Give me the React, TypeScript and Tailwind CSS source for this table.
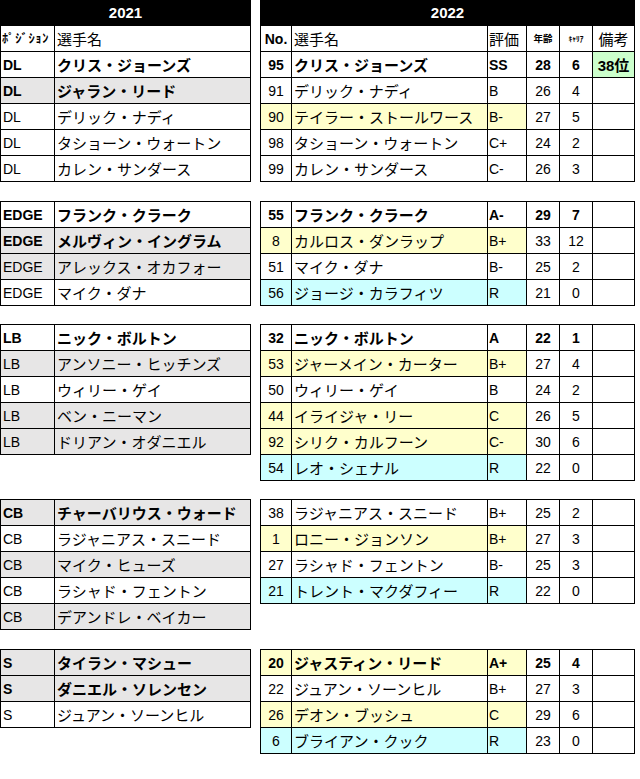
type LRow = { pos: string; name: string; bold?: boolean; gray?: boolean };
type RRow = {
  no: string;
  name: string;
  grade: string;
  age: string;
  career: string;
  note?: string;
  bold?: boolean;
  bg?: "y" | "c";
};
type Group = { left: LRow[]; right: RRow[]; gap: string };

const GROUPS: Group[] = [
  {
    gap: "",
    left: [
      { pos: "DL", name: "クリス・ジョーンズ", bold: true },
      { pos: "DL", name: "ジャラン・リード", bold: true, gray: true },
      { pos: "DL", name: "デリック・ナディ" },
      { pos: "DL", name: "タショーン・ウォートン" },
      { pos: "DL", name: "カレン・サンダース" },
    ],
    right: [
      { no: "95", name: "クリス・ジョーンズ", grade: "SS", age: "28", career: "6", note: "38位", bold: true },
      { no: "91", name: "デリック・ナディ", grade: "B", age: "26", career: "4" },
      { no: "90", name: "テイラー・ストールワース", grade: "B-", age: "27", career: "5", bg: "y" },
      { no: "98", name: "タショーン・ウォートン", grade: "C+", age: "24", career: "2" },
      { no: "99", name: "カレン・サンダース", grade: "C-", age: "26", career: "3" },
    ],
  },
  {
    gap: "mt-[19px]",
    left: [
      { pos: "EDGE", name: "フランク・クラーク", bold: true },
      { pos: "EDGE", name: "メルヴィン・イングラム", bold: true, gray: true },
      { pos: "EDGE", name: "アレックス・オカフォー", gray: true },
      { pos: "EDGE", name: "マイク・ダナ" },
    ],
    right: [
      { no: "55", name: "フランク・クラーク", grade: "A-", age: "29", career: "7", bold: true },
      { no: "8", name: "カルロス・ダンラップ", grade: "B+", age: "33", career: "12", bg: "y" },
      { no: "51", name: "マイク・ダナ", grade: "B-", age: "25", career: "2" },
      { no: "56", name: "ジョージ・カラフィツ", grade: "R", age: "21", career: "0", bg: "c" },
    ],
  },
  {
    gap: "mt-[18px]",
    left: [
      { pos: "LB", name: "ニック・ボルトン", bold: true },
      { pos: "LB", name: "アンソニー・ヒッチンズ", gray: true },
      { pos: "LB", name: "ウィリー・ゲイ" },
      { pos: "LB", name: "ベン・ニーマン", gray: true },
      { pos: "LB", name: "ドリアン・オダニエル", gray: true },
    ],
    right: [
      { no: "32", name: "ニック・ボルトン", grade: "A", age: "22", career: "1", bold: true },
      { no: "53", name: "ジャーメイン・カーター", grade: "B+", age: "27", career: "4", bg: "y" },
      { no: "50", name: "ウィリー・ゲイ", grade: "B", age: "24", career: "2" },
      { no: "44", name: "イライジャ・リー", grade: "C", age: "26", career: "5", bg: "y" },
      { no: "92", name: "シリク・カルフーン", grade: "C-", age: "30", career: "6", bg: "y" },
      { no: "54", name: "レオ・シェナル", grade: "R", age: "22", career: "0", bg: "c" },
    ],
  },
  {
    gap: "mt-[18px]",
    left: [
      { pos: "CB", name: "チャーバリウス・ウォード", bold: true, gray: true },
      { pos: "CB", name: "ラジャニアス・スニード" },
      { pos: "CB", name: "マイク・ヒューズ", gray: true },
      { pos: "CB", name: "ラシャド・フェントン" },
      { pos: "CB", name: "デアンドレ・ベイカー", gray: true },
    ],
    right: [
      { no: "38", name: "ラジャニアス・スニード", grade: "B+", age: "25", career: "2" },
      { no: "1", name: "ロニー・ジョンソン", grade: "B+", age: "27", career: "3", bg: "y" },
      { no: "27", name: "ラシャド・フェントン", grade: "B-", age: "25", career: "3" },
      { no: "21", name: "トレント・マクダフィー", grade: "R", age: "22", career: "0", bg: "c" },
    ],
  },
  {
    gap: "mt-[19px]",
    left: [
      { pos: "S", name: "タイラン・マシュー", bold: true, gray: true },
      { pos: "S", name: "ダニエル・ソレンセン", bold: true, gray: true },
      { pos: "S", name: "ジュアン・ソーンヒル" },
    ],
    right: [
      { no: "20", name: "ジャスティン・リード", grade: "A+", age: "25", career: "4", bold: true, bg: "y" },
      { no: "22", name: "ジュアン・ソーンヒル", grade: "B+", age: "27", career: "3" },
      { no: "26", name: "デオン・ブッシュ", grade: "C", age: "29", career: "6", bg: "y" },
      { no: "6", name: "ブライアン・クック", grade: "R", age: "23", career: "0", bg: "c" },
    ],
  },
];

const LAT = "font-['Liberation_Sans','Noto_Sans_CJK_JP',sans-serif] text-[14px]";
const JP = "font-['Noto_Sans_CJK_JP',sans-serif] text-[15px]";
const CELL = "h-full flex items-center border-r border-black leading-none";

const BG = { y: "bg-[#ffffcc]", c: "bg-[#ccffff]" };

const LeftTable = ({ rows, head }: { rows: LRow[]; head: boolean }) => (
  <div className="w-[251px] flex flex-col">
    {head && (
      <div className={`h-[26px] bg-black text-white font-bold flex items-center justify-center ${LAT} text-[15px]`}>
        2021
      </div>
    )}
    <div className={`border-l border-black ${head ? "" : "border-t"}`}>
      {head && (
        <div className="flex h-[26px] border-b border-black">
          <div className={`${CELL} w-[54px] pl-[1px]`}>
            <span className="font-['Noto_Sans_CJK_JP',sans-serif] text-[12.5px] font-bold tracking-[0.7px]">ﾎﾟｼﾞｼｮﾝ</span>
          </div>
          <div className={`${CELL} w-[196px] pl-[2px] ${JP} text-[14.5px]`}>選手名</div>
        </div>
      )}
      {rows.map((r, i) => (
        <div
          key={i}
          className={`flex h-[26px] border-b border-black ${r.gray ? "bg-[#e7e6e6]" : "bg-white"} ${r.bold ? "font-bold" : ""}`}
        >
          <div className={`${CELL} w-[54px] pl-[2px] pt-[1px] ${LAT}`}>{r.pos}</div>
          <div className={`${CELL} w-[196px] pl-[2px] ${JP}`}>{r.name}</div>
        </div>
      ))}
    </div>
  </div>
);

const RightTable = ({ rows, head }: { rows: RRow[]; head: boolean }) => (
  <div className="w-[375px] flex flex-col">
    {head && (
      <div className={`h-[26px] bg-black text-white font-bold flex items-center justify-center ${LAT} text-[15px]`}>
        2022
      </div>
    )}
    <div className={`border-l border-black ${head ? "" : "border-t"}`}>
      {head && (
        <div className="flex h-[26px] border-b border-black">
          <div className={`${CELL} w-[31px] justify-center font-bold ${LAT}`}>No.</div>
          <div className={`${CELL} w-[196px] pl-[2px] ${JP} text-[14.5px]`}>選手名</div>
          <div className={`${CELL} w-[39px] pl-[1px] ${JP} text-[14px]`}>評価</div>
          <div className={`${CELL} w-[33px] justify-center font-bold font-['Noto_Sans_CJK_JP',sans-serif] text-[9.5px]`}>
            年齢
          </div>
          <div className={`${CELL} w-[33px] justify-center font-bold font-['Noto_Sans_CJK_JP',sans-serif] text-[7.5px]`}>
            ｷｬﾘｱ
          </div>
          <div className={`${CELL} w-[42px] justify-center ${JP} text-[14.5px]`}>備考</div>
        </div>
      )}
      {rows.map((r, i) => {
        const bg = r.bg ? BG[r.bg] : "bg-white";
        return (
          <div key={i} className={`flex h-[26px] border-b border-black bg-white ${r.bold ? "font-bold" : ""}`}>
            <div className={`${CELL} ${bg} w-[31px] justify-center pt-[1px] ${LAT}`}>{r.no}</div>
            <div className={`${CELL} ${bg} w-[196px] pl-[2px] ${JP}`}>{r.name}</div>
            <div className={`${CELL} ${bg} w-[39px] pl-[1px] pt-[1px] ${LAT}`}>{r.grade}</div>
            <div className={`${CELL} w-[33px] justify-center pt-[1px] ${LAT}`}>{r.age}</div>
            <div className={`${CELL} w-[33px] justify-center pt-[1px] ${LAT}`}>{r.career}</div>
            <div
              className={`${CELL} w-[42px] justify-center pt-[1px] ${LAT} text-[15px] ${r.note ? "bg-[#ccffcc]" : ""}`}
            >
              {r.note}
            </div>
          </div>
        );
      })}
    </div>
  </div>
);

export default function App() {
  return (
    <div className="w-[640px] h-[779px] bg-white text-black overflow-hidden">
      {GROUPS.map((g, i) => (
        <div key={i} className={`flex items-start gap-[9px] ${g.gap}`}>
          <LeftTable rows={g.left} head={i === 0} />
          <RightTable rows={g.right} head={i === 0} />
        </div>
      ))}
    </div>
  );
}
